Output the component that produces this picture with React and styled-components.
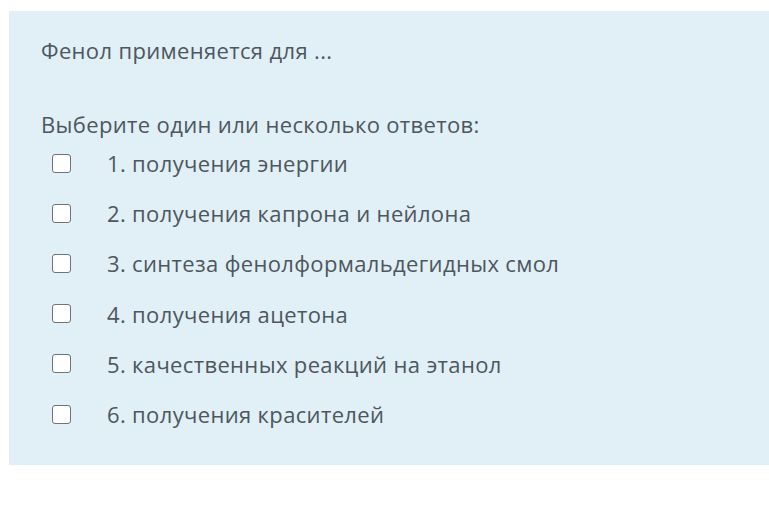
import React from "react";
import styled, { createGlobalStyle } from "styled-components";

const GlobalStyle = createGlobalStyle`
  html, body {
    margin: 0;
    padding: 0;
    background: #ffffff;
  }
  body {
    font-family: "Open Sans", "Noto Sans", "DejaVu Sans", sans-serif;
  }
`;

const Page = styled.div`
  padding: 11px 0 0 9px;
  width: 769px;
  height: 520px;
  box-sizing: border-box;
  overflow: hidden;
`;

const Panel = styled.div`
  background: #e1eff7;
  height: 454px;
  box-sizing: border-box;
  padding: 24px 32px 0 32px;
  color: #4d575d;
  font-size: 22px;
  letter-spacing: 0.35px;
`;

const Question = styled.p`
  margin: 0 0 44px;
  line-height: 30px;
`;

const Prompt = styled.div`
  line-height: 30px;
`;

const Options = styled.ul`
  list-style: none;
  margin: -1px 0 0;
  padding: 0;
  display: flex;
  flex-direction: column;
`;

const Option = styled.li`
  display: flex;
  align-items: center;
  height: 50.2px;
  padding-left: 11px;
`;

const Box = styled.span`
  width: 17px;
  height: 17px;
  border: 1.5px solid #6f7477;
  border-radius: 3px;
  background: #ffffff;
  flex: none;
`;

const Label = styled.span`
  margin-left: 36px;
`;

const answers = [
  "1. получения энергии",
  "2. получения капрона и нейлона",
  "3. синтеза фенолформальдегидных смол",
  "4. получения ацетона",
  "5. качественных реакций на этанол",
  "6. получения красителей",
];

export default function App() {
  return (
    <>
      <GlobalStyle />
      <Page>
        <Panel>
          <Question>Фенол применяется для ...</Question>
          <Prompt>Выберите один или несколько ответов:</Prompt>
          <Options>
            {answers.map((a) => (
              <Option key={a}>
                <Box />
                <Label>{a}</Label>
              </Option>
            ))}
          </Options>
        </Panel>
      </Page>
    </>
  );
}
